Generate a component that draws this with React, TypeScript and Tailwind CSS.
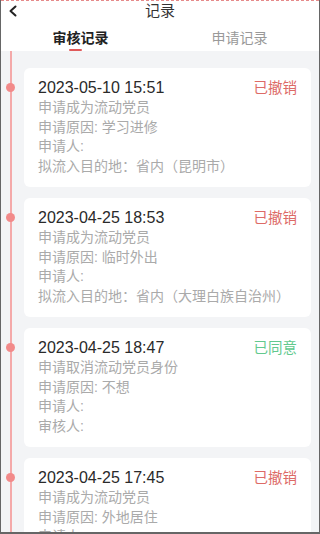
import React from 'react'

type Record = {
  time: string
  status: string
  agreed?: boolean
  lines: string[]
}

const records: Record[] = [
  {
    time: '2023-05-10 15:51',
    status: '已撤销',
    lines: ['申请成为流动党员', '申请原因: 学习进修', '申请人:', '拟流入目的地：省内（昆明市）'],
  },
  {
    time: '2023-04-25 18:53',
    status: '已撤销',
    lines: ['申请成为流动党员', '申请原因: 临时外出', '申请人:', '拟流入目的地：省内（大理白族自治州）'],
  },
  {
    time: '2023-04-25 18:47',
    status: '已同意',
    agreed: true,
    lines: ['申请取消流动党员身份', '申请原因: 不想', '申请人:', '审核人:'],
  },
  {
    time: '2023-04-25 17:45',
    status: '已撤销',
    lines: ['申请成为流动党员', '申请原因: 外地居住', '申请人:', '拟流入目的地：省内（昆明市）'],
  },
]

function RecordCard({ rec }: { rec: Record }) {
  return (
    <div className="relative shrink-0 h-[119px] rounded-[6px] bg-white pl-[14px] pr-[14px] pt-[10px]">
      <span className="absolute left-[-18px] top-[15px] h-[9px] w-[9px] rounded-full bg-[#f28a8a]" />
      <div className="flex h-[20px] items-center justify-between">
        <span className="text-[16px] leading-[20px] text-[#2a2a2a]">{rec.time}</span>
        <span className={'text-[14.5px] leading-[20px] ' + (rec.agreed ? 'text-[#62c98e]' : 'text-[#dd6a66]')}>
          {rec.status}
        </span>
      </div>
      {rec.lines.map((l, i) => (
        <div key={i} className="h-[19.5px] text-[14px] leading-[19.5px] text-[#aaaaaa] whitespace-nowrap">
          {l}
        </div>
      ))}
    </div>
  )
}

export default function App() {
  return (
    <div
      className="relative flex h-[534px] w-[320px] flex-col overflow-hidden border-x border-b-2 border-[#666] bg-white"
      style={{ fontFamily: '"Liberation Sans", "Noto Sans CJK SC", sans-serif' }}
    >
      <div className="absolute left-0 right-0 top-0 border-t border-dashed border-[#e58a8a]" />
      {/* header */}
      <div className="relative flex h-[22px] shrink-0 items-center justify-center">
        <svg className="absolute left-[7px] top-[5px]" width="10" height="12" viewBox="0 0 10 12">
          <polyline points="7.5,1.5 2.5,6 7.5,10.5" fill="none" stroke="#222" strokeWidth="2" strokeLinecap="round" strokeLinejoin="round" />
        </svg>
        <span className="text-[15px] leading-[20px] text-[#333]">记录</span>
      </div>
      {/* tabs */}
      <div className="flex h-[29px] shrink-0 pt-[3px]">
        <div className="relative flex flex-1 items-center justify-center">
          <span className="text-[14px] font-bold text-[#222]">审核记录</span>
          <span className="absolute bottom-[0px] left-[68px] h-[2px] w-[13px] rounded-full bg-[#e05a5a]" />
        </div>
        <div className="flex flex-1 items-center justify-center">
          <span className="text-[14px] text-[#999]">申请记录</span>
        </div>
      </div>
      {/* content */}
      <div className="relative flex flex-1 flex-col gap-[11px] bg-[#f3f4f6] pl-[23px] pr-[8px] pt-[17px]">
        <span className="absolute bottom-0 left-[9px] top-0 w-[1.5px] bg-[#f4a9a9]" />
        {records.map((r, i) => (
          <RecordCard key={i} rec={r} />
        ))}
      </div>
    </div>
  )
}
